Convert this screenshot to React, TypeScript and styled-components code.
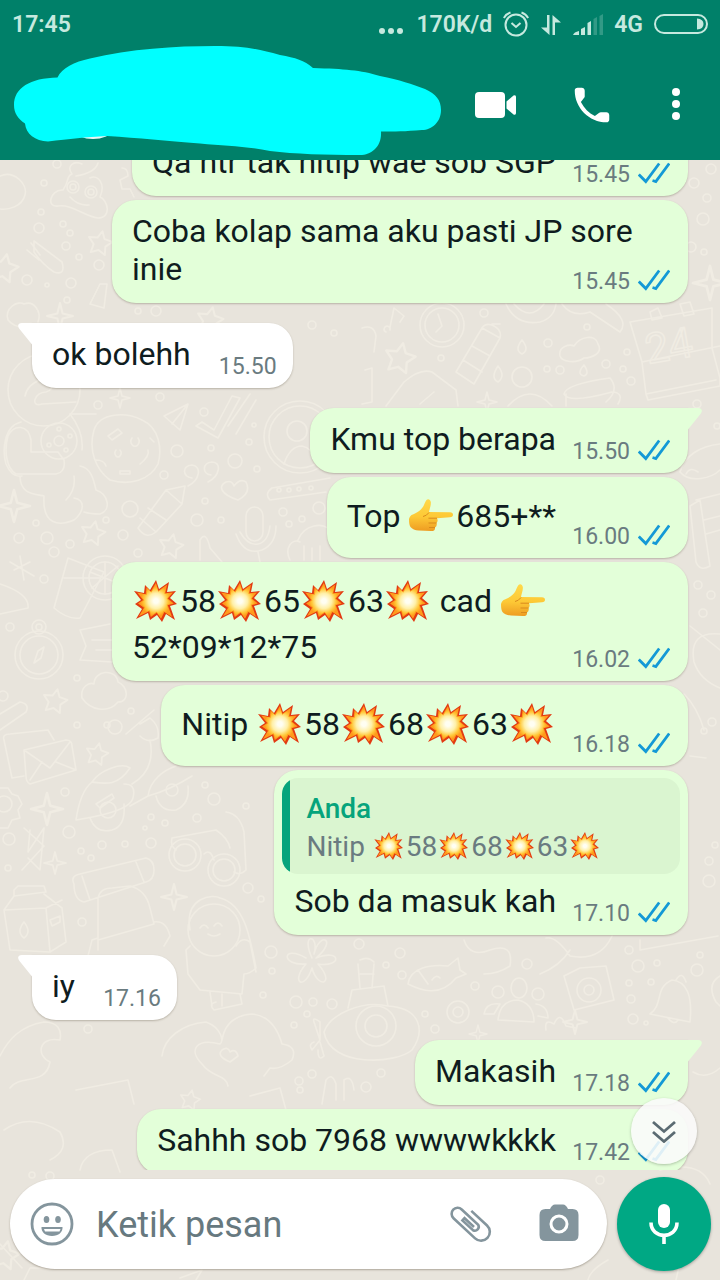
import React, { useId } from "react";
import styled, { createGlobalStyle, css } from "styled-components";

const GlobalStyle = createGlobalStyle`
  *, *::before, *::after { box-sizing: border-box; }
  body { margin: 0; font-family: Roboto, "Liberation Sans", sans-serif; color: #0f1c20; }
  button { border: 0; padding: 0; background: none; display: grid; place-items: center; flex: none; cursor: pointer; }
  svg { display: block; }
`;

const Screen = styled.div`
  position: relative;
  isolation: isolate;
  display: flex;
  flex-direction: column;
  height: 100vh;
  overflow: hidden;
  background: #e8e4dc;
`;

const WallpaperArt = styled.svg`
  position: absolute;
  inset: 0;
  width: 100%;
  height: 100%;
  z-index: -1;
`;

const Header = styled.header`
  flex: none;
  background: #008069;
`;

const StatusBar = styled.div`
  display: flex;
  align-items: center;
  height: 50px;
  padding: 0 12px;
  color: #c6e9df;
  font-size: 23px;
  font-weight: 600;
  line-height: 28px;
`;

const StatusGroup = styled.div`
  display: flex;
  align-items: center;
  gap: 11px;
  margin-left: auto;
`;

const Toolbar = styled.div`
  display: flex;
  align-items: center;
  height: 110px;
  padding: 0 32px 0 14px;
`;

const Scribble = styled.svg`
  flex: none;
  overflow: visible;
`;

const Actions = styled.div`
  display: flex;
  align-items: center;
  gap: 48px;
  margin-left: auto;
  color: #fff;
`;

const ToolButton = styled.button<{ $narrow?: boolean }>`
  width: ${(p) => (p.$narrow ? 24 : 48)}px;
  height: 48px;
  color: inherit;
`;

const Chat = styled.main`
  position: relative;
  flex: 1;
  min-height: 0;
  display: flex;
  flex-direction: column;
  justify-content: flex-end;
  overflow: hidden;
`;

const Messages = styled.ol`
  list-style: none;
  display: flex;
  flex-direction: column;
  gap: 4px;
  margin: 0 0 -4px;
  padding: 0 32px;
`;

const Bubble = styled.li<{ $out: boolean; $first: boolean }>`
  position: relative;
  max-width: 576px;
  border-radius: 24px;
  box-shadow: 0 1px 2px rgba(60, 50, 30, 0.28);
  ${(p) =>
    p.$out
      ? css`
          align-self: flex-end;
          background: #e3ffd9;
        `
      : css`
          align-self: flex-start;
          background: #fff;
        `}
  ${(p) =>
    p.$first &&
    css`
      margin-top: 16px;
      border-top-${p.$out ? "right" : "left"}-radius: 0;
    `}
`;

const TailArt = styled.svg<{ $out: boolean }>`
  position: absolute;
  top: 0;
  ${(p) => (p.$out ? "right: -14px; transform: scaleX(-1);" : "left: -14px;")}
`;

const Body = styled.div<{ $out: boolean; $quoted: boolean }>`
  display: grid;
  padding: ${(p) => (p.$quoted ? 8 : 12)}px ${(p) => (p.$out ? 18 : 16)}px 7px 20px;
`;

const Text = styled.p`
  grid-area: 1 / 1;
  margin: 0;
  padding-bottom: 8px;
  font-size: 32px;
  line-height: 38px;
`;

const MetaSpace = styled.span<{ $out: boolean }>`
  display: inline-block;
  width: ${(p) => (p.$out ? 114 : 86)}px;
  height: 1px;
`;

const Meta = styled.span`
  grid-area: 1 / 1;
  justify-self: end;
  align-self: end;
  display: flex;
  gap: 8px;
  color: #6a7b80;
  font-size: 23px;
  line-height: 28px;
`;

const Quote = styled.blockquote`
  margin: 8px 8px 0;
  padding: 12px 16px 8px 24px;
  border-radius: 16px;
  background: linear-gradient(to right, #06a47c 8px, #daf5d0 8px);
  color: #6a7b80;
  font-size: 28px;
  line-height: 38px;
`;

const QuoteAuthor = styled.strong`
  display: block;
  color: #06a47c;
  font-weight: 500;
`;

const QuoteText = styled.span`
  display: block;
  white-space: nowrap;
`;

const EmojiArt = styled.svg<{ $small?: boolean }>`
  display: inline-block;
  width: ${(p) => (p.$small ? 34 : 48)}px;
  height: ${(p) => (p.$small ? 36 : 54)}px;
  vertical-align: ${(p) => (p.$small ? -8 : -16)}px;
`;

const ScrollDown = styled.button`
  position: absolute;
  right: 23px;
  bottom: 6px;
  width: 66px;
  height: 66px;
  border-radius: 50%;
  background: rgba(250, 250, 250, 0.88);
  box-shadow: 0 1px 3px rgba(0, 0, 0, 0.25);
`;

const Composer = styled.form`
  flex: none;
  display: flex;
  align-items: center;
  gap: 10px;
  padding: 7px 9px 9px 10px;
`;

const Field = styled.div`
  flex: 1;
  min-width: 0;
  display: flex;
  align-items: center;
  gap: 22px;
  height: 90px;
  padding: 0 26px 0 20px;
  border-radius: 45px;
  background: #fff;
  box-shadow: 0 1px 2px rgba(60, 50, 30, 0.35);
  color: #84959d;
`;

const FieldButton = styled.button`
  width: 44px;
  height: 44px;
  color: inherit;
`;

const FieldActions = styled.div`
  display: flex;
  gap: 44px;
`;

const MessageInput = styled.input`
  flex: 1;
  min-width: 0;
  border: 0;
  outline: 0;
  padding: 2px 0 0;
  background: none;
  font: 36px/44px Roboto, "Liberation Sans", sans-serif;
  color: #0f1c20;
  &::placeholder { color: #67797f; opacity: 1; }
`;

const MicButton = styled.button`
  width: 94px;
  height: 94px;
  border-radius: 50%;
  background: #00a884;
  box-shadow: 0 1px 3px rgba(0, 0, 0, 0.3);
`;

const BURST =
  "0,11 10,13 11,5 16,10 22,0 25,9 35,2 33,12 42,11 36,18 43,24 36,26 41,40 32,34 28,42 23,35 16,40 14,33 2,39 8,29 1,24 7,20";

function Boom({ small }: { small?: boolean }) {
  const id = useId();
  return (
    <EmojiArt $small={small} viewBox="0 0 48 54" role="img" aria-label="💥">
      <defs>
        <radialGradient id={id} gradientUnits="userSpaceOnUse" cx="22" cy="21" r="20">
          <stop offset="0.15" stopColor="#fffef2" />
          <stop offset="0.5" stopColor="#fff0a8" />
          <stop offset="0.78" stopColor="#ffc83a" />
          <stop offset="1" stopColor="#ff9a1c" />
        </radialGradient>
      </defs>
      <g transform="translate(2 6)">
        <polygon points={BURST} fill="#e23a12" />
        <polygon points={BURST} fill="#ff9a1c" transform="translate(3.2 3.1) scale(.85)" />
        <polygon points={BURST} fill={`url(#${id})`} transform="translate(5 4.800) scale(.77)" />
      </g>
    </EmojiArt>
  );
}

function PointRight() {
  const id = useId();
  return (
    <EmojiArt viewBox="0 0 48 54" role="img" aria-label="👉">
      <defs>
        <linearGradient id={id} x1="0" y1="0" x2="0" y2="1">
          <stop offset="0" stopColor="#ffd94a" />
          <stop offset="0.55" stopColor="#fdc936" />
          <stop offset="1" stopColor="#ee9c22" />
        </linearGradient>
      </defs>
      <g transform="translate(1 10)">
        <path
          d="M0 20C1 16 3 16 6 14.500C10 12.500 13 10 14.500 7C15.500 5 16 3 17.500 1C19 -.7 21.500 .5 21.800 3C22.200 6.500 20.500 10 20 13L41 13.200Q44 13.600 44 15.800Q44 18 41 18.300L28 19.200Q29.500 22 27.500 24Q28.500 27 26 28.500Q26.500 32 22 32L10 31.500C6 31.300 3 30 1.500 28Q0 26 0 20Z"
          fill={`url(#${id})`}
        />
        <path d="M20 13.500Q17.500 17 14 17.500M28 19.200H19.500M27.500 24H19.500M26 28.500H20" fill="none" stroke="#d98a1d" strokeWidth="1" />
      </g>
    </EmojiArt>
  );
}

const Tail = ({ out }: { out: boolean }) => (
  <TailArt $out={out} width="15" height="24" viewBox="0 0 15 24" aria-hidden="true">
    <path d="M15 0H4C0 0 -1 3 1.500 6L14 21.500V24H15Z" fill={out ? "#e3ffd9" : "#fff"} />
  </TailArt>
);

const Ticks = () => (
  <svg width="32" height="28" viewBox="0 0 32 28" fill="none" stroke="#1499d6" strokeWidth="2.8" role="img" aria-label="Dibaca">
    <path d="M.8 13.500L7.800 20.500L21.200 2.500M14.500 19.500L17.800 20.500L31.200 2.500" />
  </svg>
);

interface Message {
  time: string;
  out?: boolean;
  first?: boolean;
  quote?: boolean;
  body: React.ReactNode;
}

const messages: Message[] = [
  { out: true, time: "15.45", body: "Qa ntr tak nitip wae sob SGP" },
  { out: true, time: "15.45", body: "Coba kolap sama aku pasti JP sore inie" },
  { first: true, time: "15.50", body: "ok bolehh" },
  { out: true, first: true, time: "15.50", body: "Kmu top berapa" },
  { out: true, time: "16.00", body: <>Top <PointRight />685+**</> },
  { out: true, time: "16.02", body: <><Boom />58<Boom />65<Boom />63<Boom /> cad <PointRight /> 52*09*12*75</> },
  { out: true, time: "16.18", body: <>Nitip <Boom />58<Boom />68<Boom />63<Boom /></> },
  { out: true, quote: true, time: "17.10", body: "Sob da masuk kah" },
  { first: true, time: "17.16", body: "iy" },
  { out: true, first: true, time: "17.18", body: "Makasih" },
  { out: true, time: "17.42", body: "Sahhh sob 7968 wwwwkkkk" },
];

function MessageBubble({ out = false, first = false, quote = false, time, body }: Message) {
  return (
    <Bubble $out={out} $first={first}>
      {first && <Tail out={out} />}
      {quote && (
        <Quote>
          <QuoteAuthor>Anda</QuoteAuthor>
          <QuoteText>
            Nitip <Boom small />58<Boom small />68<Boom small />63<Boom small />
          </QuoteText>
        </Quote>
      )}
      <Body $out={out} $quoted={quote}>
        <Text>
          {body}
          <MetaSpace $out={out} />
        </Text>
        <Meta>
          <time>{time}</time>
          {out && <Ticks />}
        </Meta>
      </Body>
    </Bubble>
  );
}

const DOTS: [number, number, number][] = [
  [44, 183, 3], [57, 164, 4], [41, 212, 3], [39, 228, 5], [63, 224, 3], [70, 233, 3], [66, 246, 4], [79, 257, 3], [99, 265, 5], [27, 280, 5], [47, 285, 2], [71, 283, 5], [67, 300, 3],
  [138, 311, 3], [156, 311, 5], [98, 405, 4], [160, 397, 4], [312, 325, 4], [334, 333, 3], [484, 313, 4], [587, 327, 3], [548, 343, 4], [560, 370, 4], [547, 369, 3], [606, 364, 4], [623, 369, 3], [627, 352, 3], [631, 381, 4], [441, 358, 3],
  [694, 183, 5], [711, 169, 5], [707, 198, 4], [703, 219, 6], [691, 247, 5], [704, 252, 3], [697, 404, 4], [717, 426, 3],
  [204, 412, 4], [211, 448, 3], [254, 425, 2], [249, 442, 3], [177, 451, 6], [235, 461, 7], [257, 469, 3], [164, 475, 4], [205, 501, 3], [130, 509, 8], [197, 520, 6], [221, 520, 3], [106, 520, 3], [36, 523, 3], [19, 538, 5], [47, 538, 6], [70, 544, 4], [54, 552, 5], [123, 535, 5], [138, 553, 4], [283, 512, 4], [289, 524, 3], [302, 519, 3], [319, 508, 6], [44, 579, 4], [10, 627, 4],
  [698, 585, 4], [711, 595, 4], [703, 613, 4], [712, 722, 4], [704, 731, 3],
  [77, 678, 3], [3, 696, 5], [131, 711, 3], [77, 725, 3], [107, 725, 3], [115, 727, 7], [65, 792, 4], [69, 832, 6], [9, 839, 6], [102, 845, 4], [125, 844, 3], [81, 851, 3], [91, 858, 3], [151, 843, 5], [165, 823, 3], [151, 817, 3], [145, 828, 2], [197, 818, 4], [205, 785, 3], [214, 799, 6], [246, 806, 3], [82, 922, 4], [8, 868, 3], [248, 888, 5], [261, 899, 3],
  [709, 861, 4], [709, 881, 6], [715, 845, 3], [271, 952, 6], [272, 971, 3], [263, 995, 3], [296, 1002, 6], [313, 1002, 4], [332, 1004, 5], [307, 1014, 3], [294, 1025, 3], [359, 944, 5], [386, 965, 3], [400, 953, 5], [402, 975, 4], [475, 986, 4], [527, 964, 5], [425, 1014, 3], [435, 1029, 4], [638, 966, 6], [629, 950, 4], [657, 963, 3], [651, 982, 3], [629, 983, 3], [631, 999, 4], [633, 1019, 5], [697, 970, 6], [700, 955, 3], [646, 1023, 2],
  [381, 1073, 4], [299, 1081, 4], [366, 1087, 5], [312, 1074, 4], [300, 1090, 3], [32, 1175, 3], [50, 1176, 4], [600, 1180, 4], [88, 1029, 4],
];

const STARS: [number, number, number][] = [
  [100, 243, 12], [4, 268, 14], [210, 320, 13], [400, 358, 15], [93, 533, 12], [171, 546, 12], [55, 701, 12], [97, 754, 11], [190, 1100, 10], [5, 1255, 14],
];

const SPARKS: [number, number, number][] = [
  [60, 316, 13], [120, 398, 10], [14, 506, 16], [47, 809, 16], [55, 863, 11], [174, 897, 13], [575, 1022, 12], [710, 283, 17], [487, 402, 10], [478, 1034, 9],
];

function Wallpaper() {
  return (
    <WallpaperArt viewBox="0 0 720 1280" preserveAspectRatio="xMidYMid slice" fill="none" stroke="#f0ece3" strokeWidth="1.600" strokeLinejoin="round" strokeLinecap="round" aria-hidden="true">
      {DOTS.map(([x, y, r], i) => <circle key={i} cx={x} cy={y} r={r} />)}
      {STARS.map(([x, y, s], i) => (
        <path key={i} transform={`translate(${x} ${y}) rotate(12) scale(${s / 10})`} d="M0-10L3-4L10-3L5 2L6 9L0 6L-6 9L-5 2L-10-3L-3-4Z" />
      ))}
      {SPARKS.map(([x, y, s], i) => (
        <path key={i} transform={`translate(${x} ${y}) scale(${s / 10})`} d="M0-10L2-2L10 0L2 2L0 10L-2 2L-10 0L-2-2Z" />
      ))}
      {/* cloud, gear and swirl face */}
      <path d="M0 176C14 170 28 184 25 195C22 207 8 210 0 209M63 190C70 180 66 176 72 174C66 166 74 160 82 164M62 190C50 190 46 208 58 206C72 204 84 216 98 218C112 218 108 200 100 197C106 184 98 174 90 178M98 163C96 170 88 174 76 176" />
      <circle cx="73" cy="187" r="6" /><circle cx="73" cy="187" r="3" /><circle cx="91" cy="192" r="6" /><circle cx="91" cy="192" r="3" />
      <path d="M70 197Q78 206 89 205M122 168Q128 168 128 176L120 180L122 189L130 189L134 197M34 241L62 262Q66 276 54 272Q42 264 34 252ZM27 250L39 260M31 243L40 255" />
      <path d="M100 284L90 304L104 308L107 284ZM8 320C4 308 18 300 24 304C34 300 42 312 38 322M8 320Q16 330 34 326" />
      {/* astronaut-like figure and cookie */}
      <circle cx="44" cy="390" r="36" />
      <path d="M25 396C28 382 40 382 44 376C52 378 56 390 46 392C34 392 30 408 42 404L76 402M21 422C4 426 2 450 6 464Q12 478 22 476M31 452V440C28 424 14 424 8 436C4 450 6 468 16 474H56Q66 472 64 460L58 452H32M20 476C20 494 34 494 44 496C42 526 60 526 74 520C84 512 86 500 74 498M74 476Q76 490 66 500M70 414Q84 432 82 450M72 414H96M80 466C92 468 94 482 96 490C108 494 112 510 100 514Q90 514 84 512" />
      <circle cx="59" cy="441" r="18" /><circle cx="59" cy="441" r="5" /><circle cx="59" cy="429" r="2" /><circle cx="70" cy="436" r="2" /><circle cx="66" cy="450" r="2" /><circle cx="49" cy="445" r="2" />
      <path d="M94 430C100 412 126 412 142 420C160 428 162 450 158 464C150 480 130 486 110 480C96 470 88 450 94 430ZM108 436L118 429L122 433L112 440ZM96 460Q104 460 106 466M132 438a4 5 0 1 0 6 0M116 450a3 4 0 1 0 4 0M140 464Q150 456 148 450M120 471H130V474H120ZM150 438L154 442" />
      {/* paper plane, ticks, profile ring */}
      <path d="M164 416L188 404L180 430ZM188 404L172 424M196 426L202 422L214 430L232 396L240 398L218 438ZM228 426L250 394M236 434L256 400" />
      <circle cx="300" cy="437" r="36" /><circle cx="300" cy="437" r="31" /><circle cx="297" cy="431" r="10" /><path d="M284 464Q290 446 302 446Q312 448 316 460" />
      {/* quotes, heart, pencil, microphone, ribbon */}
      <path d="M188 486C200 480 202 466 192 465C182 466 182 476 192 478M208 482C220 476 222 462 212 462C202 463 202 474 211 475M238 500C220 494 218 486 226 482Q232 480 234 486Q240 478 246 482C250 490 246 496 238 500ZM166 490L185 486L182 504L156 532Q146 540 138 528ZM166 490L182 504M148 508L166 520M140 518L156 532M330 478L272 488Q264 494 270 500L326 492" />
      <rect x="246" y="507" width="17" height="34" rx="9" /><path d="M236 534Q244 556 262 550Q276 544 276 526M240 532Q248 546 258 544Q268 542 270 526M258 552L260 562M290 560C284 548 292 538 300 542M304 560V546M312 560V548M320 560V546M298 540C304 524 324 522 330 530M200 560V540Q206 530 210 548L222 562" />
      <circle cx="279" cy="490" r="2" /><circle cx="289" cy="490" r="2" /><circle cx="299" cy="489" r="2" /><circle cx="311" cy="488" r="2" />
      {/* music note, clock, bottle, calendar and cup */}
      <path d="M390 327L394 308L404 316L400 322M390 330a3 3 0 1 0-4 2M362 328Q374 324 376 336L374 352M365 370L372 368V402L362 404M386 406L404 382Q420 368 432 372L456 390L458 406M420 404L434 392" />
      <circle cx="442" cy="325" r="22" /><circle cx="442" cy="325" r="17" /><path d="M438 314L442 326L436 332M456 372L482 328L500 338L474 384ZM492 324L500 324M472 346L490 356M463 360L482 372M482 328Q486 322 494 326Q502 330 500 338M522 340Q514 350 522 354Q530 350 522 340M498 366Q490 378 498 382Q506 376 498 366M584 365Q576 374 584 376Q590 374 584 365" />
      <circle cx="522" cy="377" r="10" /><path d="M506 304Q516 326 540 322Q554 318 556 304M514 304Q530 322 544 304M562 304Q572 318 590 312L620 332Q630 320 606 304M560 356C558 346 570 344 574 346C580 336 596 334 598 344C604 354 590 358 584 358C576 364 562 362 560 356ZM564 394Q566 384 610 378Q620 390 606 402M564 394Q568 404 612 392M566 394V406M614 392Q624 394 618 404M508 406Q530 382 552 406M646 394L642 362L630 322L712 308V348L720 378V386L648 400ZM642 362L720 346M646 394L716 380M650 312L658 308L662 318L652 320ZM680 304L690 302L694 314L684 316Z" />
      <text x="648" y="364" transform="rotate(-10 648 364)" fontFamily="Roboto, sans-serif" fontSize="42">24</text>
      {/* right edge foods */}
      <path d="M720 444C700 446 684 456 680 472C690 484 712 478 720 470M686 474Q690 466 698 472M696 500L720 494M690 506L700 500L710 566Q700 572 696 562ZM704 520L720 516M706 534L720 530M690 626L720 650M720 634C700 632 690 640 694 662Q700 680 720 688M684 694C694 704 700 716 704 730M690 756L706 758" />
      {/* juice glass, compass, hat */}
      <path d="M68 558L104 572L80 618Q68 620 54 608ZM64 578L100 578" /><circle cx="105" cy="578" r="22" /><circle cx="105" cy="578" r="16" /><path d="M105 562V594M90 572L120 584M92 588L118 566M0 584Q30 594 28 608L0 614M14 570L30 562M20 556L24 580M10 562L34 576M80 630L110 624M80 630L86 646L80 660L112 662M92 640H112M96 650H112" />
      <circle cx="39" cy="655" r="24" /><circle cx="39" cy="655" r="19" /><circle cx="39" cy="627" r="7" /><circle cx="39" cy="627" r="3" /><path d="M34 663L38 651L44 647L41 658Z" />
      {/* cloud, letters, moped */}
      <path d="M82 698C80 686 90 682 94 684C94 670 116 668 118 682C128 686 130 702 118 702C108 714 90 710 82 698ZM0 714L20 702Q30 704 26 712L0 730M4 740Q2 734 10 734L48 730L54 740M4 740L12 778L24 776M24 750L66 740Q72 740 72 746L76 770L30 784Q26 782 26 776ZM24 750L50 768L70 742M30 780L42 762M76 770L56 762M126 734L154 710M140 724L150 718Q160 726 158 738Q148 744 140 736M150 740Q156 770 132 784M92 782C100 770 122 762 130 768C118 786 106 784 92 782ZM92 782C82 790 78 806 76 820C100 816 130 810 133 798C136 786 130 784 124 784M96 804L112 794L114 798L100 808ZM130 806L148 796C150 780 164 770 176 766M148 796Q170 790 192 776" />
      <path d="M90 818Q96 834 112 830Q126 826 124 804M156 796Q160 812 176 810Q190 804 188 786" /><circle cx="108" cy="810" r="8" /><circle cx="172" cy="790" r="6" />
      {/* gear, bluetooth, sunglasses */}
      <path d="M0 788L8 788L12 794L18 796L22 804L18 810L20 818L12 820L8 828H0M24 828L44 846L22 870M30 830L28 852L44 828L40 870L28 858" /><circle cx="4" cy="804" r="8" />
      <path d="M172 838L216 830Q228 838 230 848M172 838Q170 846 176 850M226 812Q240 814 244 832L246 870Q240 876 234 872M204 854Q210 848 214 860" /><circle cx="185" cy="855" r="16" /><circle cx="185" cy="855" r="11" /><circle cx="224" cy="870" r="16" /><circle cx="224" cy="870" r="11" />
      {/* carton, backpack, hooded figure */}
      <path d="M14 890L18 886H44L46 892L14 896ZM14 896L4 910L10 950L50 952L66 942L62 908L44 894M4 910L46 908L62 900M46 908L50 952M24 922Q16 932 24 938Q32 932 24 922M50 920L60 916V922L52 926ZM74 884Q70 876 80 874L146 858Q154 860 154 870Q154 880 146 882L84 902Q74 900 74 884ZM82 876L90 900M136 862L144 882M98 950V898Q100 888 112 888L130 886Q146 890 150 908L154 924L98 940M88 956L92 940L98 938M154 922Q166 920 170 936L164 946" />
      <circle cx="214" cy="930" r="26" /><path d="M190 930C184 896 214 894 220 898C244 904 250 936 256 968Q250 974 244 974L242 994L200 990L188 974L186 950L190 946M200 928Q204 922 208 928M214 926Q218 920 222 926M208 934Q214 938 220 934M236 946Q242 936 250 942L256 972M210 992L212 1006M222 994V1006M240 994L242 1004L214 1010Q208 1004 216 1002" />
      {/* flower, submarine, fish */}
      <path d="M312 958C300 932 320 934 314 954C320 930 338 940 316 958C342 948 342 968 318 964C336 984 318 990 312 968C304 992 290 982 306 964C280 966 282 944 306 958M358 964L360 988M374 964L372 988M360 960Q368 956 374 962M360 974H374M348 1008L352 990L384 986L388 1006M324 1032C330 1014 362 1000 388 1006C420 1008 426 1030 412 1050C396 1064 330 1068 324 1032ZM320 1040L314 1022Q312 1016 320 1022ZM320 1040L312 1050Q308 1044 314 1042M320 1042L324 1056Q318 1062 318 1050" />
      <circle cx="376" cy="1026" r="20" /><circle cx="376" cy="1026" r="11" /><path d="M408 984C410 968 430 964 448 966L458 958L460 970L466 974L456 978C440 998 420 990 408 984ZM418 970L428 984M432 980Q436 974 440 978M464 940Q470 958 490 950Q514 942 510 966Q498 974 484 974M540 974Q560 966 570 950M546 938Q556 936 570 956Q600 962 612 936M640 940V950L718 936" />
      {/* people, camera, bell, gear */}
      <ellipse cx="519" cy="988" rx="8" ry="10" /><circle cx="498" cy="992" r="6" /><circle cx="538" cy="994" r="6" /><circle cx="458" cy="1012" r="11" /><circle cx="458" cy="1012" r="5" /><path d="M498 1020Q500 1000 518 1000Q534 1004 534 1022ZM484 1014Q486 1002 500 1004L494 1014ZM536 1004Q548 1006 548 1018L538 1016M564 976L580 968L606 966L614 1000L574 1010ZM650 1014C664 1004 654 988 672 980Q694 982 690 1022ZM676 980Q682 970 686 982M668 1018Q674 1026 678 1020" /><circle cx="589" cy="990" r="12" /><circle cx="589" cy="990" r="5" />
      <path d="M546 1030Q544 1018 554 1024Q560 1010 566 1026L576 1028M720 976Q706 984 716 1002L720 1006M693 1072Q706 1080 720 1068" />
      {/* hands with heart and lower doodles */}
      <path d="M0 1056C8 1040 20 1026 44 1022C58 1022 62 1030 60 1040C38 1036 36 1056 50 1062C46 1086 20 1074 10 1088M162 1056C164 1038 182 1024 206 1022C222 1028 224 1042 220 1044C196 1038 188 1050 202 1064C212 1078 226 1074 228 1086M222 1040Q226 1016 252 1014Q274 1016 282 1044Q298 1046 292 1060Q280 1070 270 1068L264 1076M230 1062Q216 1056 222 1050Q228 1046 230 1052Q236 1048 238 1056Z" />
      <path d="M76 1090L128 1080L134 1104M250 1096L280 1088L286 1110M322 1104L326 1080Q332 1072 336 1084V1100M344 1100L344 1080Q352 1074 354 1090M4 1130Q30 1112 60 1132Q70 1150 50 1160M80 1170Q84 1150 112 1150L120 1172M0 1244L22 1268M24 1280L30 1268H110M180 1278L202 1270L196 1280M660 1170Q700 1160 710 1184M640 1256L680 1262L676 1280M608 1260Q590 1270 588 1280" />
    </WallpaperArt>
  );
}

function StatusIcons() {
  return (
    <>
      <svg width="26" height="28" viewBox="0 0 26 28" fill="none" stroke="currentColor" strokeWidth="2" aria-hidden="true">
        <circle cx="13" cy="14" r="10.500" />
        <path d="M8.500 12L13 16L17.500 12M.8 7Q3 3 7.500 1.500M25.200 7Q23 3 18.500 1.500" />
      </svg>
      <svg width="22" height="28" viewBox="0 0 22 28" aria-hidden="true" fill="currentColor">
        <path d="M7 4H9.500V24L1 16.500H7ZM12.500 24H15V11.500H21L12.500 4Z" />
      </svg>
      <svg width="30" height="28" viewBox="0 0 30 28" fill="currentColor" aria-hidden="true">
        <path d="M0 24Q1 21 6 20V24ZM8 18L12 16V24H8ZM14.500 12L18 10V24H14.500Z" />
        <path d="M20.500 8L24 6V24H20.500ZM26.500 5L30 3V24H26.500Z" opacity=".25" />
      </svg>
    </>
  );
}

export default function App() {
  return (
    <Screen>
      <GlobalStyle />
      <Wallpaper />
      <Header>
        <StatusBar>
          <time>17:45</time>
          <StatusGroup>
            <svg width="28" height="28" viewBox="0 0 28 28" fill="currentColor" aria-hidden="true">
              <circle cx="5" cy="20" r="3" /><circle cx="14" cy="20" r="3" /><circle cx="23" cy="20" r="3" />
            </svg>
            <span>170K/d</span>
            <StatusIcons />
            <span>4G</span>
            <svg width="54" height="28" viewBox="0 0 54 28" fill="none" stroke="currentColor" strokeWidth="2" aria-label="Baterai" role="img">
              <rect x="1" y="4" width="52" height="18" rx="9" />
              <path d="M43 7.500Q49.500 8 49.500 13Q49.500 18 43 18.500Z" fill="currentColor" stroke="none" />
            </svg>
          </StatusGroup>
        </StatusBar>
        <Toolbar>
          <Scribble width="427" height="110" viewBox="14 50 427 110" aria-hidden="true">
            <circle cx="93" cy="105" r="34" fill="#eef6f4" />
            <path
              fill="#0ff"
              d="M57.500 77.500C62 68 74 62 90 58.500C130 49 175 46 215 46C245 46 258 49 280 55C296 58 304 60 313 68C345 69 360 70 380 76C400 80 412 84 425 89C436 94 441 100 441 110C441 122 432 130 422 130C405 131.500 395 131.500 381 131.500C382 146 372 155 360 155C325 155 295 154 270 151C245 146 225 146 200 143.500C165 141 140 138 107 136C85 137 70 139 48 141.500C35 141 26 134 25 123.500C18 119 14 113 14 105C14 88 30 78 57.500 77.500Z"
            />
          </Scribble>
          <Actions>
            <ToolButton type="button" aria-label="Panggilan video">
              <svg width="42" height="28" viewBox="0 0 42 28" fill="currentColor">
                <rect x="0" y="1" width="30" height="26" rx="4" />
                <path d="M31.500 10.500L38.500 4.600Q41 3.500 41 6V22Q41 24.500 38.500 23.400L31.500 17.500Z" />
              </svg>
            </ToolButton>
            <ToolButton type="button" aria-label="Panggilan suara">
              <svg width="46" height="46" viewBox="0 0 24 24" fill="currentColor">
                <path d="M6.200 10.400c1.600 3.200 4.100 5.700 7.300 7.300l2.100-1.500c.4-.4.900-.5 1.300-.4h2.600c.8 0 1.500.7 1.500 1.500v2.200c0 .9-.6 1.500-1.400 1.500C10.500 21 3 13.500 3 4.400 3 3.600 3.600 3 4.500 3h2.200c.8 0 1.500.7 1.500 1.500v2.600c.1.400 0 .9-.4 1.300z" />
              </svg>
            </ToolButton>
            <ToolButton type="button" $narrow aria-label="Menu lainnya">
              <svg width="8" height="34" viewBox="0 0 8 34" fill="currentColor">
                <circle cx="4" cy="4" r="4" /><circle cx="4" cy="16" r="4" /><circle cx="4" cy="28" r="4" />
              </svg>
            </ToolButton>
          </Actions>
        </Toolbar>
      </Header>

      <Chat>
        <Messages>
          {messages.map((m, i) => <MessageBubble key={i} {...m} />)}
        </Messages>
        <ScrollDown type="button" aria-label="Gulir ke bawah">
          <svg width="24" height="24" viewBox="0 0 24 24" fill="none" stroke="#5b6b72" strokeWidth="2.800">
            <path d="M1 3L12 12.500L23 3M1 13L12 22.500L23 13" />
          </svg>
        </ScrollDown>
      </Chat>

      <Composer onSubmit={(e) => e.preventDefault()}>
        <Field>
          <FieldButton type="button" aria-label="Emoji">
            <svg width="44" height="44" viewBox="0 0 44 44">
              <circle cx="22" cy="22" r="20" fill="none" stroke="currentColor" strokeWidth="2.800" />
              <ellipse cx="16.500" cy="17.500" rx="2.800" ry="3.600" fill="currentColor" />
              <ellipse cx="28" cy="17.500" rx="2.800" ry="3.600" fill="currentColor" />
              <path d="M11.500 25H32.500C33 30 28.500 34 22 34S11 30 11.500 25Z" fill="currentColor" />
              <path d="M14 27H30.500L29.500 29.500H15Z" fill="#fff" />
            </svg>
          </FieldButton>
          <MessageInput type="text" placeholder="Ketik pesan" aria-label="Ketik pesan" />
          <FieldActions>
            <FieldButton type="button" aria-label="Lampirkan">
              <svg width="44" height="44" viewBox="0 0 44 44" fill="none" stroke="currentColor" strokeWidth="2.600">
                <path transform="translate(21 22) rotate(43)" d="M-8 -10.500H13.500A8.750 8.750 0 0 1 13.500 7H-16A6 6 0 0 1 -16 -5H6.500A3.900 3.900 0 0 1 6.500 2.500H-8V-.5H5" />
              </svg>
            </FieldButton>
            <FieldButton type="button" aria-label="Kamera">
              <svg width="44" height="44" viewBox="0 0 44 44">
                <path d="M13 7Q15 2.500 18 2.500H26Q29 2.500 31 7H35.500Q41.500 7 41.500 13V33Q41.500 39 35.500 39H8.500Q2.500 39 2.500 33V13Q2.500 7 8.500 7Z" fill="currentColor" />
                <circle cx="22" cy="22" r="8" fill="none" stroke="#fff" strokeWidth="3" />
              </svg>
            </FieldButton>
          </FieldActions>
        </Field>
        <MicButton type="button" aria-label="Rekam pesan suara">
          <svg width="32" height="42" viewBox="0 0 32 42">
            <rect x="10" y="1" width="12" height="24" rx="6" fill="#fff" />
            <path d="M3 19.500C3 36.500 29 36.500 29 19.500M16 32V41" fill="none" stroke="#fff" strokeWidth="3.600" />
          </svg>
        </MicButton>
      </Composer>
    </Screen>
  );
}
